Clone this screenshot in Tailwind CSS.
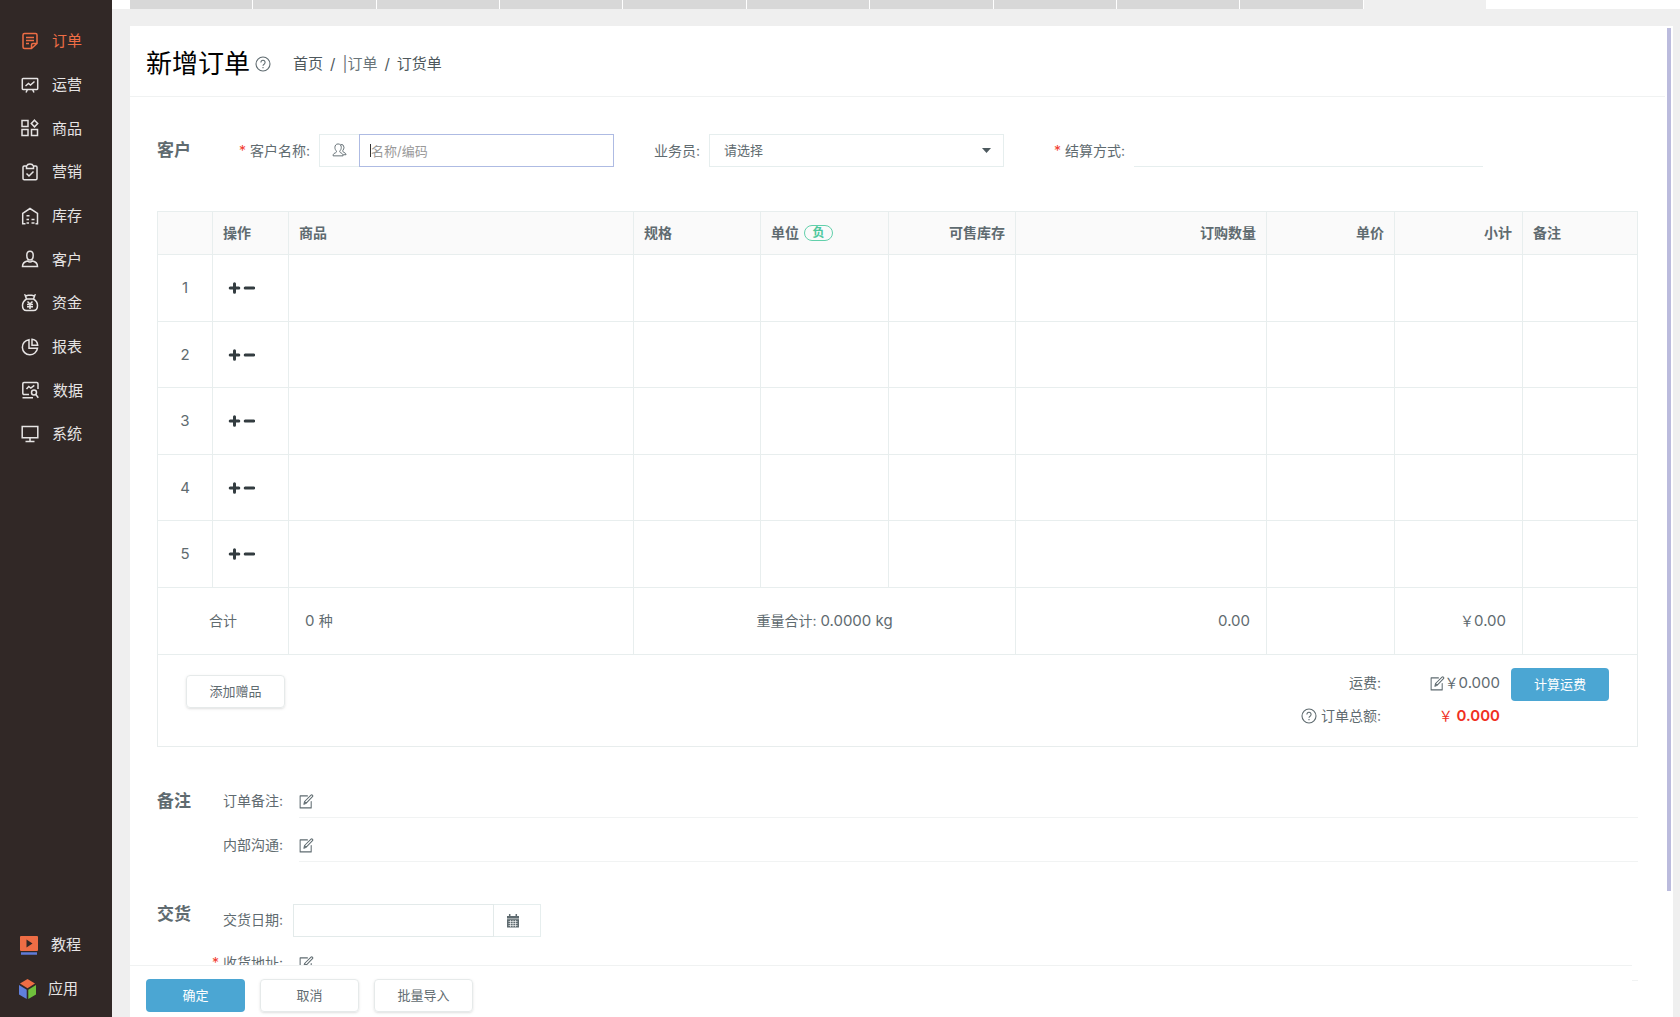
<!DOCTYPE html>
<html lang="zh-CN">
<head>
<meta charset="utf-8">
<title>新增订单</title>
<script src="https://cdn.jsdelivr.net/npm/@tailwindcss/browser@4"></script>
</head>
<body class="flex h-screen overflow-hidden bg-[#efefef] font-['Inter','Noto_Sans_CJK_SC',sans-serif] text-sm text-[#5f6b70]">

<svg class="hidden">
  <symbol id="edit" viewBox="0 0 16 16"><g fill="none" stroke="currentColor" stroke-width="1.1" stroke-linejoin="round" stroke-linecap="round"><path d="M9 2H1.2v12.8H13V8"/><path d="M5.2 11l.7-3L12.800 1.200q.7-.6 1.500.1t.1 1.600L7.700 9.800zM5.900 8l1.800 1.800"/></g></symbol>
  <symbol id="help" viewBox="0 0 16 16"><g fill="none" stroke="currentColor" stroke-width="1.100"><circle cx="8" cy="8" r="7"/><path d="M5.900 6.400a2.100 2.100 0 1 1 3.200 1.800c-.8.5-1.100.8-1.100 1.600"/><path d="M8 11v1.300"/></g></symbol>
  <symbol id="pm" viewBox="0 0 26 12"><path d="M6 1.700v8.600M1.700 6h8.600M16.700 6h8.600" fill="none" stroke="#333c40" stroke-width="3" stroke-linecap="round"/></symbol>
</svg>

<aside class="flex w-28 shrink-0 flex-col justify-between bg-[#312826] pt-[19px] pb-1.5 text-[15px] text-[#e6e4e4]">
  <nav class="grid h-[437px] grid-rows-10 [&_a]:flex [&_a]:items-center [&_a]:gap-[13px] [&_a]:pl-[21px] [&_svg]:size-[18px] [&_svg]:fill-none [&_svg]:stroke-current [&_svg]:stroke-[1.500]">
    <a href="#" class="text-[#ee6d45]"><svg viewBox="0 0 18 18"><path d="M10.500 16.500H3.500a1.500 1.500 0 0 1-1.500-1.500V3a1.500 1.500 0 0 1 1.500-1.500h11A1.500 1.500 0 0 1 16 3v8.500zM10.500 16.500V13a1.500 1.500 0 0 1 1.500-1.500h4M5 5.500h8M5 8.500h8M5 11.500h3"/></svg>订单</a>
    <a href="#"><svg viewBox="0 0 18 18"><path d="M2 2.500h14a.7.7 0 0 1 .7.700v9.600a.7.7 0 0 1-.7.700H2a.7.7 0 0 1-.7-.7V3.200a.7.7 0 0 1 .7-.7zM4.500 10l3-2.500 2 1.500 4-3.500M6.500 13.500l-1.500 3M11.500 13.500l1.500 3"/></svg>运营</a>
    <a href="#"><svg viewBox="0 0 18 18"><path d="M1 1.500h6v6H1zM1 10.500h6v6H1zM10.500 10.500h6v6h-6zM13.500 1.200l3.200 3.300-3.200 3.300-3.200-3.300z"/></svg>商品</a>
    <a href="#"><svg viewBox="0 0 18 18"><path d="M5.500 3H3.200A1.200 1.200 0 0 0 2 4.200v11.300a1.200 1.200 0 0 0 1.200 1.200h11.600a1.200 1.200 0 0 0 1.200-1.200V4.200A1.200 1.200 0 0 0 14.800 3h-2.300M5.500 5.500V3q1-2 3.500-2t3.500 2v2.500zM5.500 10.500l2.500 2.500 4.500-4.500"/></svg>营销</a>
    <a href="#"><svg viewBox="0 0 18 18"><path d="M4.500 16.700H1.700V6.300L9 1.500l7.500 4.800v10.400h-2M5.500 8.700h3M5.500 12.500h2.500M10.500 12.500h3M5.500 16h2.500M10.500 16h3"/></svg>库存</a>
    <a href="#"><svg viewBox="0 0 18 18"><path d="M9 1.200c2 0 3.200 1.500 3.200 4S11 10 9 10 5.800 7.700 5.800 5.200 7 1.200 9 1.200zM6.500 11q-5 1-5 5.500h15q0-4.500-5-5.500-2.500 2-5 0z"/></svg>客户</a>
    <a href="#"><svg viewBox="0 0 18 18"><path d="M5.500 5L4.200 1.300q1.600.7 2.600 0h4.400q1 .7 2.600 0L12.500 5q4 2.500 4 6.500 0 5-4 5h-7q-4 0-4-5 0-4 4-6.500zM5.500 5h7M6.500 7.500L9 10l2.500-2.500M6 10.500h6M6 12.700h6M9 10v5"/></svg>资金</a>
    <a href="#"><svg viewBox="0 0 18 18"><path d="M8 1.700a7.600 7.600 0 1 0 8.500 8.500H8zM11 1.300v5.900h5.700Q16.300 2 11 1.300z"/></svg>报表</a>
    <a href="#" class="!gap-[14px]"><svg viewBox="0 0 18 18"><path d="M8 13.500H3a1.200 1.200 0 0 1-1.200-1.200V2.700A1.200 1.200 0 0 1 3 1.500h12.800A1.200 1.200 0 0 1 17 2.700V8M1.500 16.700H12M5.500 8l2.300-2.500 2 1.500 3.500-2.700"/><circle cx="13" cy="11.500" r="2.500"/><path d="M14.800 13.500l2.500 3.200"/></svg>数据</a>
    <a href="#"><svg viewBox="0 0 18 18"><path d="M1.200 1.500h15.600v11.300H1.200zM9 12.800v3.700M4.500 16.500h9"/></svg>系统</a>
  </nav>
  <nav class="[&_a]:flex [&_a]:h-11 [&_a]:items-center">
    <a href="#" class="gap-3 pl-[19px]"><svg class="h-[19px] w-[20px]" viewBox="0 0 20 19"><rect x="1" y="0" width="18" height="15" rx="1" fill="#ee6d45"/><path d="M7.500 3.500v8l6-4z" fill="#312826"/><path d="M2 17.500h16" stroke="#5f7bd8" stroke-width="2.500"/></svg>教程</a>
    <a href="#" class="gap-3 pl-[19px]"><svg class="h-5 w-[17px]" viewBox="0 0 17 20"><path d="M8.500 0L16 4.500 8.500 9.300 1 4.500z" fill="#ee6d45"/><path d="M0 6l7.700 4.700V20L0 15.500z" fill="#6080dc"/><path d="M17 6l-7.700 4.700V20l7.700-4.500z" fill="#6fc03c"/></svg>应用</a>
  </nav>
</aside>

<div class="flex min-w-0 flex-1 flex-col">
  <div class="h-[9px] shrink-0 bg-white pl-[18px]">
    <div class="grid h-full w-[1356px] max-w-full grid-cols-11 gap-px [&>i]:bg-[#d8d8d8]">
      <i></i><i></i><i></i><i></i><i></i><i></i><i></i><i></i><i></i><i></i><b class="bg-[#efefef]"></b>
    </div>
  </div>

  <main class="relative mt-[17px] mr-[7px] ml-[18px] min-h-0 flex-1 overflow-hidden bg-white">
    <header class="mr-2 flex h-[71px] items-center border-b border-[#f0f2f2] pb-1 pl-4 pt-2.5">
      <h1 class="text-[26px] leading-9 text-black">新增订单</h1>
      <svg class="ml-[5px] size-4"><use href="#help"/></svg>
      <nav class="ml-[22px] flex gap-[7px] text-[15px] text-[#4e585c]"><a href="#">首页</a><span>/</span><a href="#" class="text-[#6a757a]">|订单</a><span>/</span><span>订货单</span></nav>
    </header>

    <form class="ml-[27px] mr-[35px]">
      <section class="mt-[37px] flex h-[33px] items-center pr-[155px]">
        <h2 class="w-20 shrink-0 text-[17px] font-bold">客户</h2>
        <label for="cust" class="w-[82px] shrink-0 pr-[9px] text-right whitespace-nowrap"><span class="text-[#f23c2e]">*</span> 客户名称:</label>
        <div class="relative flex h-full min-w-0 flex-[295_1_0%]">
          <span class="grid w-10 shrink-0 place-items-center border border-r-0 border-[#e6eeee]"><svg class="size-[15px] fill-none stroke-current" viewBox="0 0 16 16"><path d="M6.500 1c2.200 0 3.400 1.700 3.400 3.700 0 1.700-.7 3-1.500 3.700-.5 1.300.2 1.700 1.500 2.300 1.500.7 1.900 1.700 1.900 3H1.200c0-1.500.3-2.300 1.900-3 1.500-.6 2-1 1.500-2.300C3.800 7.700 3.100 6.400 3.100 4.700 3.100 2.700 4.300 1 6.500 1zM9 1.500Q12.500 1 12.800 4.500q0 2-1.300 3.500-.6 1.200 1.300 2 2.200 1 2.200 2.500H12"/></svg></span>
          <input id="cust" type="text" placeholder="名称/编码" class="h-full min-w-0 flex-1 border border-[#aebbe3] pl-[11px] text-[13px] outline-none placeholder:text-[#999]">
          <span class="absolute top-[10px] left-[51px] h-[13px] w-px bg-[#333]"></span>
        </div>
        <label for="staff" class="w-[95px] shrink-0 pr-[9px] text-right">业务员:</label>
        <div class="relative h-full min-w-0 flex-[295_1_0%]">
          <select id="staff" class="h-full w-full appearance-none border border-[#e6eeee] bg-white pl-3.5 text-[13px]"><option>请选择</option></select>
          <svg class="pointer-events-none absolute top-[14px] right-[13px] h-[5px] w-[9px]" viewBox="0 0 9 5"><path d="M0 0h9L4.500 5z" fill="#4d595e"/></svg>
        </div>
        <label for="pay" class="w-[130px] shrink-0 pr-[9px] text-right"><span class="text-[#f23c2e]">*</span> 结算方式:</label>
        <input id="pay" type="text" class="h-full min-w-0 flex-[349_1_0%] border-b border-[#e6eeee] outline-none">
      </section>

      <div class="mt-[44px] border border-t-0 border-[#e8eded]">
        <table class="-mx-px w-[calc(100%+2px)] table-fixed border-collapse [&_td]:border [&_td]:border-[#e8eeee] [&_th]:border [&_th]:border-[#e8eeee] [&_th]:px-2.5">
          <colgroup><col class="w-[55px]"><col class="w-[76px]"><col><col class="w-[127px]"><col class="w-32"><col class="w-[127px]"><col class="w-[251px]"><col class="w-32"><col class="w-32"><col class="w-[115px]"></colgroup>
          <thead class="bg-[#fafafa] text-left"><tr class="h-[43px]"><th></th><th>操作</th><th>商品</th><th>规格</th><th><span class="flex items-center gap-[5px]">单位<span class="h-4 w-[29px] rounded-full border border-[#62d0ab] text-center text-xs leading-[14px] text-[#4cc79c]">负</span></span></th><th class="text-right">可售库存</th><th class="text-right">订购数量</th><th class="text-right">单价</th><th class="text-right">小计</th><th>备注</th></tr></thead>
          <tbody class="text-center text-[15px] [&>tr]:h-[67px] [&>tr:nth-child(even)]:h-[66px]">
            <tr><td>1</td><td><svg class="ml-[15px] h-3 w-[27px]"><use href="#pm"/></svg></td><td></td><td></td><td></td><td></td><td></td><td></td><td></td><td></td></tr>
            <tr><td>2</td><td><svg class="ml-[15px] h-3 w-[27px]"><use href="#pm"/></svg></td><td></td><td></td><td></td><td></td><td></td><td></td><td></td><td></td></tr>
            <tr><td>3</td><td><svg class="ml-[15px] h-3 w-[27px]"><use href="#pm"/></svg></td><td></td><td></td><td></td><td></td><td></td><td></td><td></td><td></td></tr>
            <tr><td>4</td><td><svg class="ml-[15px] h-3 w-[27px]"><use href="#pm"/></svg></td><td></td><td></td><td></td><td></td><td></td><td></td><td></td><td></td></tr>
            <tr><td>5</td><td><svg class="ml-[15px] h-3 w-[27px]"><use href="#pm"/></svg></td><td></td><td></td><td></td><td></td><td></td><td></td><td></td><td></td></tr>
          </tbody>
          <tfoot><tr class="h-[67px]"><td colspan="2" class="text-center">合计</td><td class="pl-4"><span class="text-[15px]">0 </span>种</td><td colspan="3" class="text-center">重量合计: <span class="text-[15px]">0.0000 kg</span></td><td class="pr-4 text-right text-[15px]">0.00</td><td></td><td class="pr-4 text-right">￥<span class="text-[15px]">0.00</span></td><td></td></tr></tfoot>
        </table>
        <div class="flex h-[91px] items-start justify-between pr-7 pl-7">
          <button type="button" class="mt-5 h-[33px] w-[99px] rounded-sm border border-[#e6eaea] text-[13px] shadow-sm">添加赠品</button>
          <div class="mt-2.5 grid grid-cols-[auto_119px_109px] items-center text-right">
            <span class="h-[34px] pt-[6px] leading-6">运费:</span>
            <span class="flex h-[34px] items-center justify-end pt-0.5"><svg class="size-[15px]"><use href="#edit"/></svg>￥<span class="text-[15px]">0.000</span></span>
            <span class="flex h-[34px] justify-end"><button type="button" class="mt-[3px] h-[33px] w-[98px] self-start rounded-sm bg-[#4ba6d3] text-[13px] text-white">计算运费</button></span>
            <span class="flex h-[34px] items-center gap-1"><svg class="size-4"><use href="#help"/></svg>订单总额:</span>
            <strong class="text-[15px] font-semibold text-[#f0301f]"><span class="text-sm font-normal">￥</span> 0.000</strong>
          </div>
        </div>
      </div>

      <section class="mt-[38px] flex leading-8">
        <h2 class="w-[66px] shrink-0 text-[17px] font-bold">备注</h2>
        <div class="grid flex-1 grid-cols-[66px_1fr] gap-x-[10px] gap-y-[11px]">
          <span>订单备注:</span><button type="button" aria-label="编辑订单备注" class="flex h-[33px] items-center border-b border-[#f1f3f3]"><svg class="size-[15px]"><use href="#edit"/></svg></button>
          <span>内部沟通:</span><button type="button" aria-label="编辑内部沟通" class="flex h-[33px] items-center border-b border-[#f1f3f3]"><svg class="size-[15px]"><use href="#edit"/></svg></button>
        </div>
      </section>

      <section class="mt-[42px] flex leading-8">
        <h2 class="w-[66px] shrink-0 text-[17px] leading-5 font-bold">交货</h2>
        <div class="min-w-0 flex-1">
          <div class="flex"><label for="date" class="w-[70px]">交货日期:</label>
            <input id="date" type="text" class="h-[33px] w-[201px] border border-[#e3eaea] px-2 outline-none">
            <button type="button" aria-label="选择日期" class="grid h-[33px] w-[47px] place-items-center border border-l-0 border-[#e6eeee] pr-2"><svg class="size-[14px]" viewBox="0 0 14 14"><path d="M1 2h12v11.500H1z" fill="#5f6b70"/><path d="M3.700 0v3M10.300 0v3" stroke="#5f6b70" stroke-width="1.500"/><path d="M1 4.800h12M2.500 7.500h9M2.500 9.500h9M2.500 11.500h9M4.500 6v7M7 6v7M9.500 6v7" stroke="#fff" stroke-width=".6"/></svg></button>
          </div>
          <div class="-ml-[11px] mt-[10px] flex"><span class="w-[87px] whitespace-nowrap"><span class="text-[#f23c2e]">*</span> 收货地址:</span><button type="button" aria-label="编辑收货地址" class="flex h-[34px] flex-1 items-center border-b border-[#f1f3f3]"><svg class="size-[15px]"><use href="#edit"/></svg></button></div>
        </div>
      </section>
    </form>

    <footer class="absolute bottom-0 left-0 right-[41px] flex h-[52px] gap-[15px] border-t border-[#f0f2f2] bg-white pt-[13px] pl-4 text-[13px]">
      <button class="h-[33px] w-[99px] rounded-sm bg-[#4ba6d3] text-white">确定</button>
      <button class="h-[33px] w-[99px] rounded-sm border border-[#e6eaea] shadow-sm">取消</button>
      <button class="h-[33px] w-[99px] rounded-sm border border-[#e6eaea] shadow-sm">批量导入</button>
    </footer>
    <div class="absolute top-0.5 right-0.5 bottom-[126px] w-1 bg-[#bbbbdd]"></div>
  </main>
</div>
</body>
</html>
